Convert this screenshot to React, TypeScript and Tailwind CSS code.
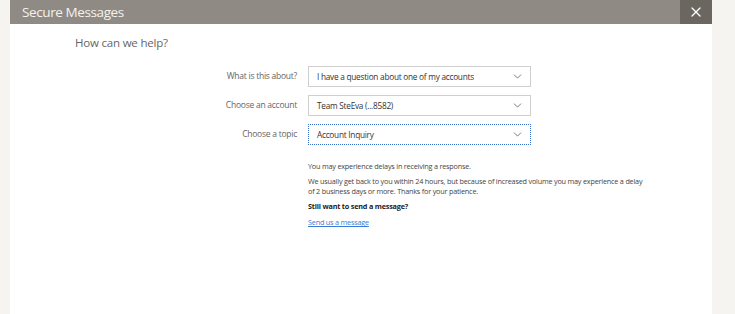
import { X, ChevronDown } from "lucide-react";

const font = { fontFamily: '"Open Sans", "Liberation Sans", sans-serif' };

function Select({ value, focused }: { value: string; focused?: boolean }) {
  return (
    <div
      className={
        "flex h-[21px] w-[223px] items-center justify-between bg-white pl-[8px] pr-[6px] text-[8.25px] tracking-[-0.25px] text-[#333] " +
        (focused ? "border border-dotted border-[#3b6fd6]" : "border border-[#cfcfcf]")
      }
    >
      <span>{value}</span>
      <ChevronDown size={13} strokeWidth={1.4} className="text-[#555]" />
    </div>
  );
}

function Row({ label, value, focused }: { label: string; value: string; focused?: boolean }) {
  return (
    <div className="flex items-center">
      <div className="w-[287px] text-right text-[8.5px] tracking-[-0.25px] text-[#666]">{label}</div>
      <div className="ml-[11px]">
        <Select value={value} focused={focused} />
      </div>
    </div>
  );
}

export default function App() {
  return (
    <div className="flex h-[314px] w-[735px] bg-[#f5f4f0]" style={font}>
      <div className="ml-[10px] flex w-[702px] flex-col bg-white">
        <div className="flex h-[24px] items-center bg-[#8f8a84]">
          <h1 className="flex-1 pl-[12px] text-[13.5px] font-normal tracking-[-0.4px] text-[#f4f2ee]">
            Secure Messages
          </h1>
          <button className="flex h-[24px] w-[32px] items-center justify-center bg-[#6b665f] text-white">
            <X size={16} strokeWidth={2} />
          </button>
        </div>
        <div className="flex-1">
          <h2 className="pl-[65px] pt-[10px] text-[11.5px] tracking-[-0.2px] text-[#666]">How can we help?</h2>
          <div className="mt-[15px] flex flex-col gap-[8px]">
            <Row label="What is this about?" value="I have a question about one of my accounts" />
            <Row label="Choose an account" value="Team SteEva (...8582)" />
            <Row label="Choose a topic" value="Account Inquiry" focused />
          </div>
          <div className="ml-[298px] mt-[16px] w-[338px] text-[7.25px] leading-[10px] tracking-[-0.2px] text-[#444]">
            <p>You may experience delays in receiving a response.</p>
            <p className="mt-[5px]">
              We usually get back to you within 24 hours, but because of increased volume you may experience a delay
              of 2 business days or more. Thanks for your patience.
            </p>
            <p className="mt-[5px] font-bold text-[#222]">Still want to send a message?</p>
            <a href="#" className="mt-[6px] block text-[#3b7bd8] underline">
              Send us a message
            </a>
          </div>
        </div>
      </div>
    </div>
  );
}
